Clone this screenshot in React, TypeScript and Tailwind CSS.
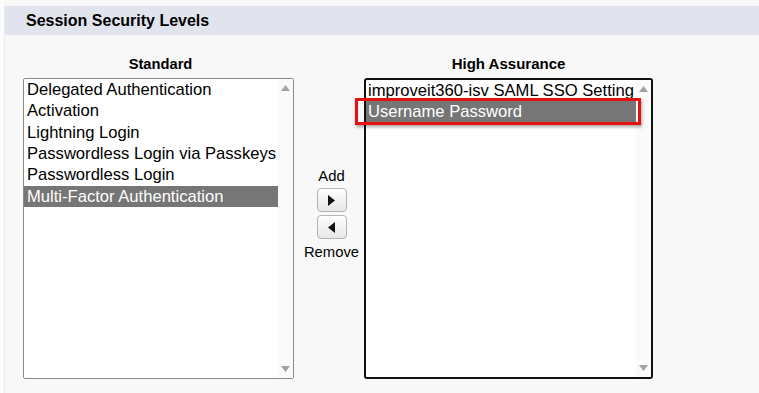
import { useState } from 'react'

const standard = [
  'Delegated Authentication',
  'Activation',
  'Lightning Login',
  'Passwordless Login via Passkeys',
  'Passwordless Login',
  'Multi-Factor Authentication',
]

const high = ['improveit360-isv SAML SSO Setting', 'Username Password']

function ScrollTrack() {
  return (
    <div className="w-[15px] bg-[#fafafa] flex flex-col items-center justify-between py-[6px]">
      <svg width="9" height="6" viewBox="0 0 9 6"><path d="M0 6 L4.5 0 L9 6 Z" fill="#a3a3a3" /></svg>
      <svg width="9" height="6" viewBox="0 0 9 6"><path d="M0 0 L4.5 6 L9 0 Z" fill="#a3a3a3" /></svg>
    </div>
  )
}

function MoveButton({ dir }: { dir: 'right' | 'left' }) {
  return (
    <button className="w-[30px] h-[24px] rounded-[4px] border border-[#b5b5b5] bg-gradient-to-b from-white to-[#e6e6e6] flex items-center justify-center">
      <svg width="7" height="11" viewBox="0 0 7 11">
        {dir === 'right' ? <path d="M0 0 L7 5.5 L0 11 Z" fill="#111" /> : <path d="M7 0 L0 5.5 L7 11 Z" fill="#111" />}
      </svg>
    </button>
  )
}

export default function App() {
  const [leftSel] = useState(5)
  const [rightSel] = useState(1)

  return (
    <div
      className="w-[759px] h-[393px] bg-[#f8f8f8] border-l-[4px] border-l-[#fcfcfc] overflow-hidden text-black"
      style={{ fontFamily: '"Liberation Sans", Arial, sans-serif' }}
    >
      <div className="border-l border-[#ececec] h-full">
        <div className="mt-[6px] h-[29px] bg-[#e1e4ed] flex items-center pl-[21px]">
          <h3 className="text-[16px] font-bold">Session Security Levels</h3>
        </div>

        <div className="flex pl-[18px] pt-[19px]">
          {/* standard column */}
          <div className="flex flex-col">
            <div className="text-[14.7px] font-bold text-center pl-[4px] h-[24px] leading-[20px]">Standard</div>
            <div className="w-[271px] h-[301px] border border-[#8a8a8a] rounded-[2px] bg-white flex">
              <ul className="flex-1 text-[16.6px]">
                {standard.map((s, i) => (
                  <li
                    key={s}
                    className={`h-[21.33px] leading-[21px] pl-[3px] whitespace-nowrap ${i === leftSel ? 'bg-[#767676] text-white' : ''}`}
                  >
                    {s}
                  </li>
                ))}
              </ul>
              <ScrollTrack />
            </div>
          </div>

          {/* add / remove */}
          <div className="w-[70px] pl-[5px] flex flex-col items-center pt-[113px] text-[14.8px]">
            <span className="leading-[18px] mb-[3px]">Add</span>
            <MoveButton dir="right" />
            <div className="h-[3px]" />
            <MoveButton dir="left" />
            <span className="leading-[18px] mt-[4px]">Remove</span>
          </div>

          {/* high assurance column */}
          <div className="flex flex-col">
            <div className="text-[15px] font-bold text-center h-[24px] leading-[20px]">High Assurance</div>
            <div className="relative w-[289px] h-[301px] border-2 border-[#111] rounded-[3px] bg-white flex">
              <ul className="flex-1 text-[16.6px]">
                {high.map((s, i) => (
                  <li
                    key={s}
                    className={`h-[21px] leading-[21px] pl-[2px] whitespace-nowrap ${i === rightSel ? 'bg-[#767676] text-white' : ''}`}
                  >
                    {s}
                  </li>
                ))}
              </ul>
              <ScrollTrack />
              <div className="absolute left-[-11px] top-[18px] w-[286px] h-[27px] border-[3px] border-[#e8100e] shadow-[1px_2px_3px_rgba(0,0,0,0.35)]" />
            </div>
          </div>
        </div>
      </div>
    </div>
  )
}
